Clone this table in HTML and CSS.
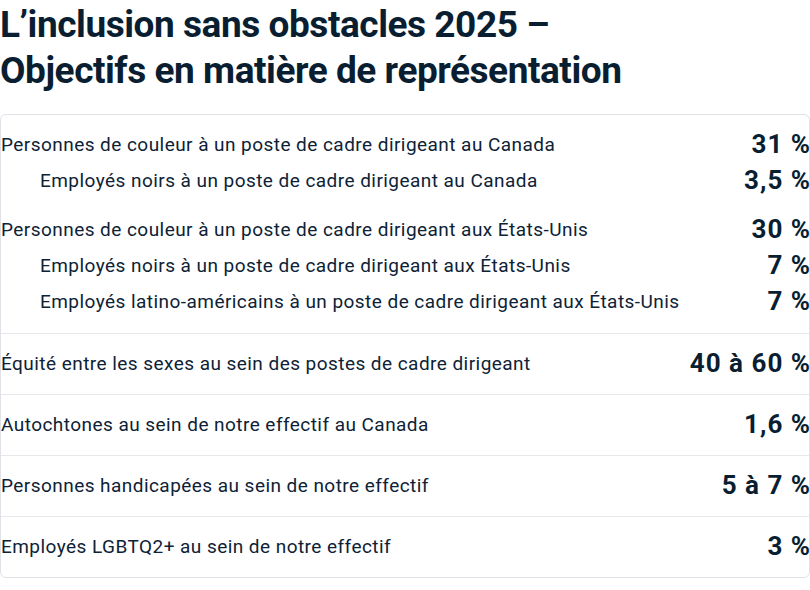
FILE: index.html
```html
<!DOCTYPE html>
<html lang="fr">
<head>
<meta charset="utf-8">
<title>L’inclusion sans obstacles 2025</title>
<link rel="stylesheet" href="styles.css">
</head>
<body>
<h1 class="title">L’inclusion sans obstacles 2025 –<br>Objectifs en matière de représentation</h1>
<div class="card">
  <div class="section first">
    <div class="group">
      <div class="row"><span class="label">Personnes de couleur à un poste de cadre dirigeant au Canada</span><span class="value">31 %</span></div>
      <div class="row sub"><span class="label">Employés noirs à un poste de cadre dirigeant au Canada</span><span class="value">3,5 %</span></div>
    </div>
    <div class="group">
      <div class="row"><span class="label">Personnes de couleur à un poste de cadre dirigeant aux États-Unis</span><span class="value">30 %</span></div>
      <div class="row sub"><span class="label">Employés noirs à un poste de cadre dirigeant aux États-Unis</span><span class="value">7 %</span></div>
      <div class="row sub"><span class="label">Employés latino-américains à un poste de cadre dirigeant aux États-Unis</span><span class="value">7 %</span></div>
    </div>
  </div>
  <div class="section">
    <div class="row"><span class="label">Équité entre les sexes au sein des postes de cadre dirigeant</span><span class="value">40 à 60 %</span></div>
  </div>
  <div class="section">
    <div class="row"><span class="label">Autochtones au sein de notre effectif au Canada</span><span class="value">1,6 %</span></div>
  </div>
  <div class="section">
    <div class="row"><span class="label">Personnes handicapées au sein de notre effectif</span><span class="value">5 à 7 %</span></div>
  </div>
  <div class="section">
    <div class="row"><span class="label">Employés LGBTQ2+ au sein de notre effectif</span><span class="value">3 %</span></div>
  </div>
</div>
</body>
</html>
```

FILE: styles.css
```css
html, body {
  margin: 0;
  padding: 0;
  background: #ffffff;
}
body {
  font-family: Roboto, "Liberation Sans", sans-serif;
  color: #0d2236;
  width: 810px;
}
.title {
  margin: 0 0 20px 0;
  padding-top: 2px;
  font-size: 37px;
  line-height: 46px;
  font-weight: 700;
  color: #0a1e31;
  letter-spacing: -0.45px;
}
.card {
  border: 1px solid #dfe2e7;
  border-radius: 6px;
  display: flex;
  flex-direction: column;
}
.section {
  display: flex;
  flex-direction: column;
  gap: 13px;
  padding: 11px 0 13px 0;
}
.section.first {
  padding-bottom: 14px;
}
.section + .section {
  border-top: 1px solid #e6e8ec;
}
.group {
  display: flex;
  flex-direction: column;
}
.row {
  display: flex;
  justify-content: space-between;
  align-items: center;
  height: 36px;
}
.row.sub {
  padding-left: 39px;
}
.label {
  font-size: 19px;
  font-weight: 400;
  letter-spacing: 0.45px;
}
.value {
  font-size: 26px;
  font-weight: 700;
  color: #0a1e31;
  letter-spacing: 1px;
  margin-right: -2px;
}
```
